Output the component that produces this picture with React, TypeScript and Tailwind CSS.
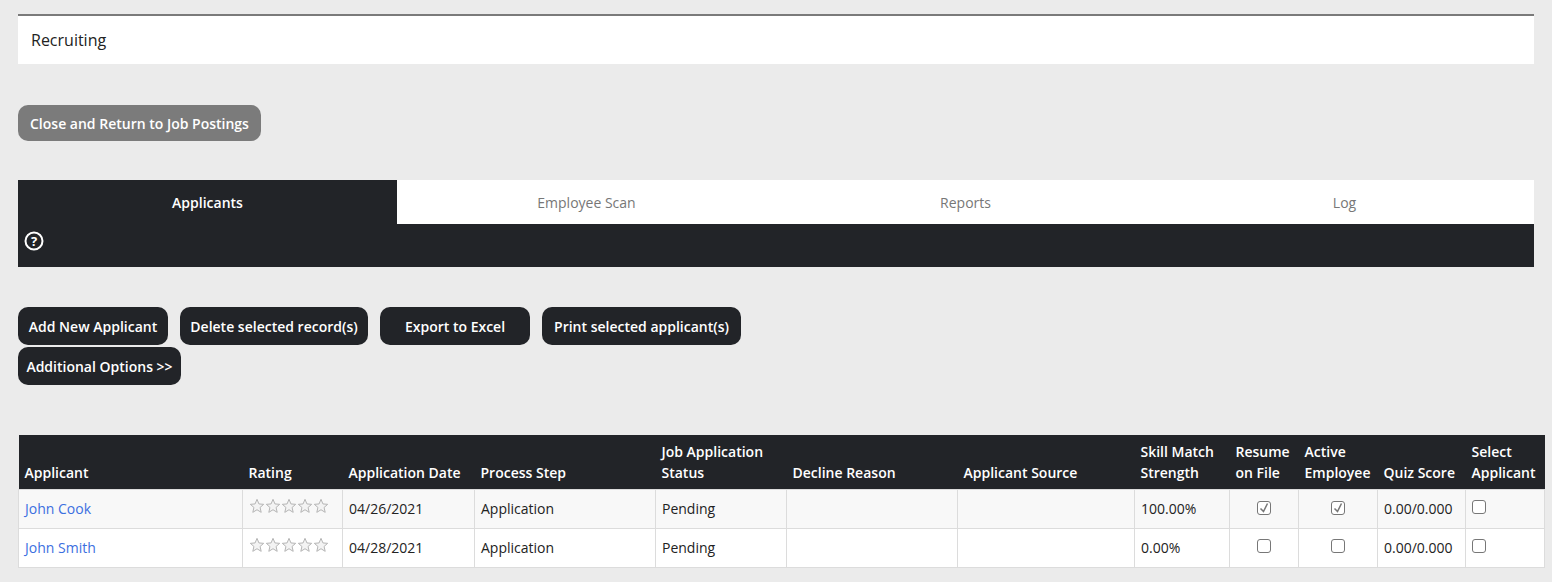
import React from "react";

const cols = [224, 100, 132, 181, 131, 171, 177, 95, 69, 79, 88, 79];
const heads: React.ReactNode[] = ["Applicant", "Rating", "Application Date", "Process Step", <>Job Application<br />Status</>, "Decline Reason", "Applicant Source", <>Skill Match<br />Strength</>, <>Resume<br />on File</>, <>Active<br />Employee</>, "Quiz Score", <>Select<br />Applicant</>];

const Stars = () => (
  <div className="flex">
    {[0, 1, 2, 3, 4].map(i => (
      <svg key={i} width="16" height="16" viewBox="0 0 24 24"><path d="M12 2l2.9 6.9 7.1.6-5.4 4.7 1.7 7.3L12 17.6 5.7 21.5l1.7-7.3L2 9.5l7.1-.6z" fill="#f3f3f3" stroke="#b5b5b5" strokeWidth="1.5" strokeLinejoin="round" /></svg>
    ))}
  </div>
);

const Box = ({ checked }: { checked?: boolean }) => (
  <span className="inline-flex w-[14px] h-[14px] border border-[#777] rounded-[3px] bg-white items-center justify-center">
    {checked && <svg width="12" height="12" viewBox="0 0 12 12"><path d="M2.5 6.5l3 3L9.5 1.5" fill="none" stroke="#777" strokeWidth="1.5" /></svg>}
  </span>
);

const rows = [
  { name: "John Cook", date: "04/26/2021", skill: "100.00%", c: true, bg: "bg-[#f8f8f8]" },
  { name: "John Smith", date: "04/28/2021", skill: "0.00%", c: false, bg: "bg-white" },
];

const Btn = ({ children, w }: { children: React.ReactNode; w: string }) => (
  <button className={`${w} h-[38px] rounded-[10px] bg-[#222428] text-white text-[14px] font-semibold`}>{children}</button>
);

export default function App() {
  return (
    <div className="min-h-[582px] bg-[#ebebeb] px-[18px] pt-[14px] pb-4 text-[#222]" style={{ fontFamily: '"Open Sans", sans-serif' }}>
      <div className="border-t-2 border-[#7a7a7a] bg-white h-[50px] flex items-center px-[13px] text-[16px]">Recruiting</div>
      <button className="mt-[41px] h-[36px] px-[12px] rounded-[10px] bg-[#7b7b7b] text-white text-[14px] font-semibold">Close and Return to Job Postings</button>
      <div className="mt-[39px]">
        <div className="grid grid-cols-4 h-[44px] text-[14px]">
          <div className="bg-[#222428] text-white font-semibold flex items-center justify-center">Applicants</div>
          <div className="bg-white text-[#777] flex items-center justify-center">Employee Scan</div>
          <div className="bg-white text-[#777] flex items-center justify-center">Reports</div>
          <div className="bg-white text-[#777] flex items-center justify-center">Log</div>
        </div>
        <div className="bg-[#222428] h-[43px] pl-[6px] pt-[7px]">
          <svg width="20" height="20" viewBox="0 0 20 20"><circle cx="10" cy="10" r="8.5" fill="none" stroke="white" strokeWidth="2" /><text x="10" y="14.5" textAnchor="middle" fill="white" fontSize="13" fontWeight="700" fontFamily="Open Sans">?</text></svg>
        </div>
      </div>
      <div className="mt-[40px] flex gap-[12px]">
        <Btn w="w-[150px]">Add New Applicant</Btn>
        <Btn w="w-[188px]">Delete selected record(s)</Btn>
        <Btn w="w-[150px]">Export to Excel</Btn>
        <Btn w="w-[199px]">Print selected applicant(s)</Btn>
      </div>
      <div className="mt-[2px]"><Btn w="w-[163px]">Additional Options &gt;&gt;</Btn></div>
      <table className="mt-[50px] w-full border-collapse table-fixed text-[14px]">
        <colgroup>{cols.map((w, i) => <col key={i} style={{ width: w }} />)}</colgroup>
        <thead>
          <tr className="bg-[#222428] text-white h-[54px]">
            {heads.map((h, i) => <th key={i} className="text-left font-semibold align-bottom px-[6px] pb-[6px] leading-[21px]">{h}</th>)}
          </tr>
        </thead>
        <tbody>
          {rows.map(r => (
            <tr key={r.name} className={`${r.bg} h-[39px]`}>
              {[
                <span className="text-[#3b6fe0]">{r.name}</span>, <Stars />, r.date, "Application", "Pending", "", "", r.skill,
                <div className="text-center"><Box checked={r.c} /></div>, <div className="text-center"><Box checked={r.c} /></div>, "0.00/0.000", <Box />,
              ].map((c, i) => (
                <td key={i} className="border border-[#dcdcdc] px-[6px] align-top pt-[8px]">{c}</td>
              ))}
            </tr>
          ))}
        </tbody>
      </table>
    </div>
  );
}
